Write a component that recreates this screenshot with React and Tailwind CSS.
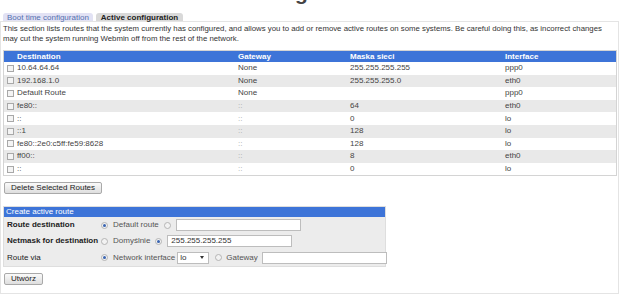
import React from "react";

const routes = [
  { dest: "10.64.64.64", gw: "None", mask: "255.255.255.255", iface: "ppp0" },
  { dest: "192.168.1.0", gw: "None", mask: "255.255.255.0", iface: "eth0" },
  { dest: "Default Route", gw: "None", mask: "", iface: "ppp0" },
  { dest: "fe80::", gw: "::", mask: "64", iface: "eth0" },
  { dest: "::", gw: "::", mask: "0", iface: "lo" },
  { dest: "::1", gw: "::", mask: "128", iface: "lo" },
  { dest: "fe80::2e0:c5ff:fe59:8628", gw: "::", mask: "128", iface: "lo" },
  { dest: "ff00::", gw: "::", mask: "8", iface: "eth0" },
  { dest: "::", gw: "::", mask: "0", iface: "lo" },
];

function Radio({ checked }) {
  return (
    <span className="inline-flex items-center justify-center w-[7px] h-[7px] rounded-full border border-[#b4b4b4] bg-[#f2f2f2] shrink-0">
      {checked && <span className="w-[3px] h-[3px] rounded-full bg-[#3a64b0]" />}
    </span>
  );
}

function Button({ children, className = "" }) {
  return (
    <button
      className={`h-[12px] px-[6px] border border-[#a9a9a9] rounded-[2px] bg-gradient-to-b from-[#fafafa] to-[#dedede] text-[8px] leading-[10px] text-[#222] whitespace-nowrap ${className}`}
    >
      {children}
    </button>
  );
}

function App() {
  return (
    <div className="w-[620px] h-[299px] bg-white overflow-hidden font-['Liberation_Sans',Arial,sans-serif] text-[8px] text-[#333]">
      {/* page title, cut off at the top */}
      <div className="h-[6px] overflow-hidden pl-[295px]">
        <div className="text-[21px] font-bold leading-[20px] -mt-[17px] text-[#444]">g</div>
      </div>

      {/* TABS */}
      <div className="flex gap-[3px] pl-[3px] mt-[7px]">
        <div className="h-[8px] leading-[9px] px-[4px] rounded-t-[3px] bg-[#e2e2f4] text-[#5470b0] text-[8px]">
          Boot time configuration
        </div>
        <div className="h-[8px] leading-[9px] px-[5px] rounded-t-[3px] bg-[#d9d9d9] text-[#222] font-bold text-[8px]">
          Active configuration
        </div>
      </div>

      {/* FRAME */}
      <div className="w-[619px] h-[273px] border border-[#e4e4e4] px-[2px]">
        <div className="pt-[2px] leading-[9.5px] text-[7.8px] text-[#333] whitespace-nowrap">
          This section lists routes that the system currently has configured, and allows you to add or remove active routes on some systems. Be careful doing this, as incorrect changes
          <br />
          may cut the system running Webmin off from the rest of the network.
        </div>

        {/* ROUTES TABLE */}
        <div className="mt-[7px] w-[614px] border border-[#d4d4d4]">
          <div className="grid grid-cols-[232px_112px_155px_1fr] h-[11px] leading-[11px] bg-[#3d74d8] text-white font-bold">
            <div className="pl-[13px]">Destination</div>
            <div className="pl-[2px]">Gateway</div>
            <div className="pl-[2px]">Maska sieci</div>
            <div className="pl-[2px]">Interface</div>
          </div>
          {routes.map((r, i) => (
            <div
              key={i}
              className={`grid grid-cols-[232px_112px_155px_1fr] h-[12.6px] items-center text-[#444] ${
                i % 2 === 1 ? "bg-[#e9e9e9]" : "bg-white"
              }`}
            >
              <div className="flex items-center pl-[3px] gap-[3px]">
                <span className="w-[7px] h-[7px] border border-[#a8a8a8] bg-[#f4f4f4]" />
                <span>{r.dest}</span>
              </div>
              <div className={`pl-[2px] ${r.gw === "::" ? "text-[#aaa]" : ""}`}>{r.gw}</div>
              <div className="pl-[2px]">{r.mask}</div>
              <div className="pl-[2px]">{r.iface}</div>
            </div>
          ))}
        </div>

        <div className="mt-[6px] pl-[1px]">
          <Button>Delete Selected Routes</Button>
        </div>

        {/* CREATE ROUTE */}
        <div className="mt-[12px] w-[383px] border border-[#dedede] bg-[#ececec] whitespace-nowrap">
          <div className="h-[10px] leading-[10px] bg-[#3d74d8] text-white pl-[2px]">Create active route</div>
          <div className="flex items-center h-[16px]">
            <div className="w-[97px] shrink-0 pl-[3px] font-bold text-[#222]">Route destination</div>
            <div className="flex items-center gap-[5px] text-[#555]">
              <Radio checked />
              <span>Default route</span>
              <Radio />
              <span className="w-[125px] h-[12px] bg-white border border-[#bdbdbd]" />
            </div>
          </div>
          <div className="flex items-center h-[16px]">
            <div className="w-[97px] shrink-0 pl-[3px] font-bold text-[#222]">Netmask for destination</div>
            <div className="flex items-center gap-[5px] text-[#555]">
              <Radio />
              <span>Domyślnie</span>
              <Radio checked />
              <span className="w-[125px] h-[12px] leading-[10px] bg-white border border-[#bdbdbd] pl-[3px] text-[#333]">
                255.255.255.255
              </span>
            </div>
          </div>
          <div className="flex items-center h-[17px]">
            <div className="w-[97px] shrink-0 pl-[3px] text-[#222]">Route via</div>
            <div className="flex items-center text-[#555]">
              <Radio checked />
              <span className="ml-[5px]">Network interface</span>
              <span className="ml-[2px] w-[32px] h-[12px] bg-white border border-[#bdbdbd] flex items-center justify-between px-[2px] text-[#333]">
                <span>lo</span>
                <span className="w-0 h-0 border-l-[2px] border-r-[2px] border-t-[3px] border-l-transparent border-r-transparent border-t-[#333] mr-[2px]" />
              </span>
              <span className="ml-[6px] flex"><Radio /></span>
              <span className="ml-[4px]">Gateway</span>
              <span className="ml-[4px] w-[125px] h-[12px] bg-white border border-[#bdbdbd]" />
            </div>
          </div>
        </div>

        <div className="mt-[6px] pl-[1px]">
          <Button>Utwórz</Button>
        </div>
      </div>
    </div>
  );
}

export default App;
